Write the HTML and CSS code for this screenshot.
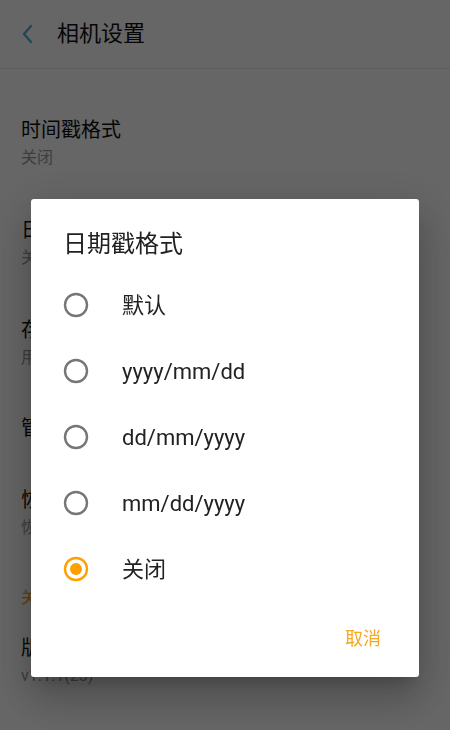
FILE: index.html
```html
<!DOCTYPE html>
<html lang="zh-CN">
<head>
<meta charset="utf-8">
<title>相机设置</title>
<link rel="stylesheet" href="styles.css">
</head>
<body>
<div class="app">
  <header class="toolbar">
    <svg class="back" width="12" height="20" viewBox="0 0 12 20" aria-hidden="true">
      <path d="M10 2 L3 10 L10 18" fill="none" stroke="#4bb3cc" stroke-width="2.4" stroke-linecap="round" stroke-linejoin="round"/>
    </svg>
    <h1 class="toolbar-title">相机设置</h1>
  </header>
  <ul class="prefs">
    <li class="pref"><div class="pref-title">时间戳格式</div><div class="pref-sub">关闭</div></li>
    <li class="pref"><div class="pref-title">日期戳格式</div><div class="pref-sub">关闭</div></li>
    <li class="pref"><div class="pref-title">存储位置</div><div class="pref-sub">用户相册</div></li>
    <li class="pref pref-single"><div class="pref-title">管理存储</div></li>
    <li class="pref"><div class="pref-title">恢复默认</div><div class="pref-sub">恢复默认设置</div></li>
    <li class="pref-section">关于</li>
    <li class="pref"><div class="pref-title">版本</div><div class="pref-sub">v1.1.1(23)</div></li>
  </ul>
</div>

<div class="scrim">
  <div class="dialog">
    <h2 class="dialog-title">日期戳格式</h2>
    <ul class="options">
      <li class="option">
        <svg class="radio" width="28" height="28" viewBox="0 0 28 28"><circle cx="14" cy="14" r="11" fill="none" stroke="#767676" stroke-width="2.4"/></svg>
        <span class="option-label">默认</span>
      </li>
      <li class="option">
        <svg class="radio" width="28" height="28" viewBox="0 0 28 28"><circle cx="14" cy="14" r="11" fill="none" stroke="#767676" stroke-width="2.4"/></svg>
        <span class="option-label">yyyy/mm/dd</span>
      </li>
      <li class="option">
        <svg class="radio" width="28" height="28" viewBox="0 0 28 28"><circle cx="14" cy="14" r="11" fill="none" stroke="#767676" stroke-width="2.4"/></svg>
        <span class="option-label">dd/mm/yyyy</span>
      </li>
      <li class="option">
        <svg class="radio" width="28" height="28" viewBox="0 0 28 28"><circle cx="14" cy="14" r="11" fill="none" stroke="#767676" stroke-width="2.4"/></svg>
        <span class="option-label">mm/dd/yyyy</span>
      </li>
      <li class="option option-checked">
        <svg class="radio" width="28" height="28" viewBox="0 0 28 28"><circle cx="14" cy="14" r="11" fill="none" stroke="#ffa000" stroke-width="2.4"/><circle cx="14" cy="14" r="6" fill="#ffa000"/></svg>
        <span class="option-label">关闭</span>
      </li>
    </ul>
    <div class="dialog-actions">
      <button class="btn-text" type="button">取消</button>
    </div>
  </div>
</div>
</body>
</html>
```
FILE: styles.css
```css
* { box-sizing: border-box; }

html, body {
  margin: 0;
  padding: 0;
  height: 100%;
}

body {
  background: #ffffff;
  font-family: Roboto, "Noto Sans CJK SC", sans-serif;
  color: #212121;
  overflow: hidden;
}

.app {
  width: 450px;
  height: 730px;
}

.toolbar {
  display: flex;
  align-items: center;
  gap: 24px;
  height: 69px;
  padding-left: 21px;
  border-bottom: 1px solid #e8e8e8;
}

.back { flex: none; }

.toolbar-title {
  margin: 0;
  font-size: 22px;
  font-weight: 400;
  line-height: 30px;
  color: #111111;
}

.prefs {
  list-style: none;
  margin: 0;
  padding: 25px 0 0;
}

.pref {
  padding: 22px 21px 23px;
}

.pref-single {
  padding: 20px 21px 22px;
}

.pref-title {
  font-size: 20px;
  line-height: 28px;
  color: #111111;
}

.pref-sub {
  font-size: 16px;
  line-height: 27px;
  color: #9a9a9a;
}

.pref-section {
  padding: 22px 21px 2px;
  font-size: 16px;
  line-height: 24px;
  color: #ff9800;
}

.scrim {
  position: fixed;
  inset: 0;
  background: rgba(0, 0, 0, 0.6);
  display: flex;
  justify-content: center;
  align-items: flex-start;
  padding-top: 199px;
}

.dialog {
  width: 388px;
  background: #ffffff;
  border-radius: 3px;
  box-shadow: 0 11px 15px -7px rgba(0, 0, 0, 0.2),
              0 24px 38px 3px rgba(0, 0, 0, 0.14),
              0 9px 46px 8px rgba(0, 0, 0, 0.12);
}

.dialog-title {
  margin: 0;
  padding: 29px 32px 0;
  font-size: 24px;
  font-weight: 400;
  line-height: 32px;
  color: #212121;
}

.options {
  list-style: none;
  margin: 12px 0 0;
  padding: 0;
}

.option {
  display: flex;
  align-items: center;
  gap: 32px;
  height: 66px;
  padding-left: 31px;
}

.radio { flex: none; }

.option-label {
  font-size: 22px;
  line-height: 30px;
  color: #222222;
  padding-top: 2px;
}

.dialog-actions {
  display: flex;
  justify-content: flex-end;
  padding: 19px 30px 20px;
}

.btn-text {
  border: 0;
  background: none;
  padding: 0 8px;
  height: 36px;
  font-family: Roboto, "Noto Sans CJK SC", sans-serif;
  font-size: 18px;
  line-height: 36px;
  color: #f5a823;
}
```
